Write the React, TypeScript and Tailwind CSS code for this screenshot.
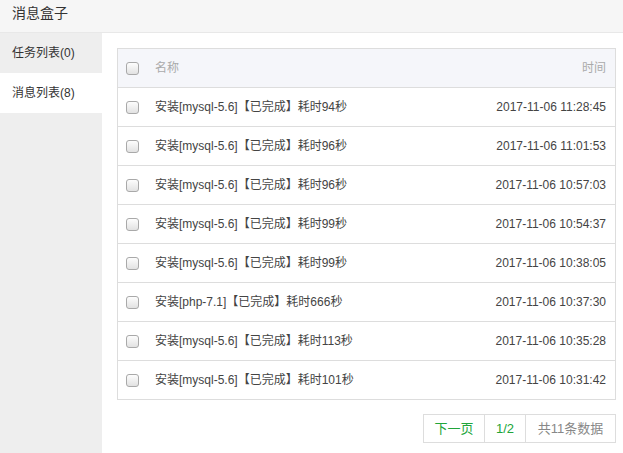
import { useState } from "react";

const rows = [
  { name: "安装[mysql-5.6]【已完成】耗时94秒", time: "2017-11-06 11:28:45" },
  { name: "安装[mysql-5.6]【已完成】耗时96秒", time: "2017-11-06 11:01:53" },
  { name: "安装[mysql-5.6]【已完成】耗时96秒", time: "2017-11-06 10:57:03" },
  { name: "安装[mysql-5.6]【已完成】耗时99秒", time: "2017-11-06 10:54:37" },
  { name: "安装[mysql-5.6]【已完成】耗时99秒", time: "2017-11-06 10:38:05" },
  { name: "安装[php-7.1]【已完成】耗时666秒", time: "2017-11-06 10:37:30" },
  { name: "安装[mysql-5.6]【已完成】耗时113秒", time: "2017-11-06 10:35:28" },
  { name: "安装[mysql-5.6]【已完成】耗时101秒", time: "2017-11-06 10:31:42" },
];

function Checkbox() {
  return (
    <span className="block h-[13px] w-[13px] rounded-[3px] border border-[#a9a9a9] bg-gradient-to-b from-[#fdfdfd] to-[#e2e2e2]" />
  );
}

export default function App() {
  const [tab, setTab] = useState(1);
  const tabs = ["任务列表(0)", "消息列表(8)"];

  return (
    <div
      className="flex h-[453px] w-[623px] flex-col bg-white text-[12px] text-[#555]"
      style={{ fontFamily: '"Liberation Sans", "Noto Sans CJK SC", sans-serif' }}
    >
      {/* Header */}
      <div className="flex h-[33px] shrink-0 items-center border-b border-[#e8e8e8] bg-[#f6f6f6] px-3 pb-[6px] text-[14px] text-[#333]">
        消息盒子
      </div>

      <div className="flex min-h-0 flex-1">
        {/* Sidebar */}
        <div className="w-[102px] shrink-0 bg-[#eeeeee]">
          {tabs.map((t, i) => (
            <button
              key={t}
              onClick={() => setTab(i)}
              className={
                "flex h-[40px] w-full items-center px-3 text-left text-[12px] text-[#333] " +
                (tab === i ? "bg-white" : "bg-[#eeeeee]")
              }
            >
              {t}
            </button>
          ))}
        </div>

        {/* Main */}
        <div className="flex flex-1 flex-col pl-[15px] pr-[7px] pt-[15px]">
          <div className="border border-[#dddddd]">
            <div className="flex h-[39px] items-center border-b border-[#dddddd] bg-[#f5f6fa] pl-[8px] pr-[9px] text-[#aaaaaa]">
              <Checkbox />
              <span className="ml-[16px] flex-1">名称</span>
              <span>时间</span>
            </div>
            {rows.map((r, i) => (
              <div
                key={i}
                className={
                  "flex items-center pl-[8px] pr-[9px] " +
                  (i < rows.length - 1 ? "h-[39px] border-b border-[#dddddd]" : "h-[38px]")
                }
              >
                <Checkbox />
                <span className="ml-[16px] flex-1 text-[#444]">{r.name}</span>
                <span className="text-[#444]">{r.time}</span>
              </div>
            ))}
          </div>

          <div className="mt-[14px] flex justify-end">
            <div className="flex h-[29px] border border-[#dddddd] text-[13px]">
              <span className="flex w-[61px] items-center justify-center border-r border-[#dddddd] text-[#20a53a]">
                下一页
              </span>
              <span className="flex w-[41px] items-center justify-center border-r border-[#dddddd] text-[#20a53a]">
                1/2
              </span>
              <span className="flex w-[89px] items-center justify-center text-[#888]">
                共11条数据
              </span>
            </div>
          </div>
        </div>
      </div>
    </div>
  );
}
